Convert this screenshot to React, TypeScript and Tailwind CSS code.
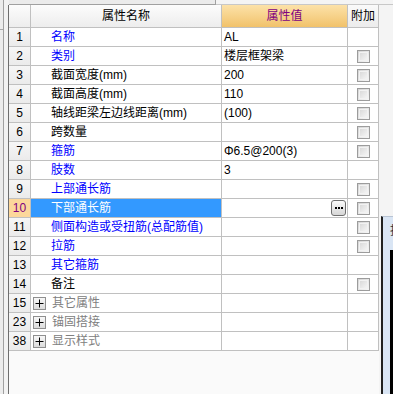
import React from "react";

type Row = {
    n: string;
    name: string;
    tone: "blue" | "black" | "group";
    value?: string;
    check?: boolean;
    selected?: boolean;
};

const rows: Row[] = [
    { n: "1", name: "名称", tone: "blue", value: "AL" },
    { n: "2", name: "类别", tone: "blue", value: "楼层框架梁", check: true },
    { n: "3", name: "截面宽度(mm)", tone: "black", value: "200", check: true },
    { n: "4", name: "截面高度(mm)", tone: "black", value: "110", check: true },
    { n: "5", name: "轴线距梁左边线距离(mm)", tone: "black", value: "(100)", check: true },
    { n: "6", name: "跨数量", tone: "black", check: true },
    { n: "7", name: "箍筋", tone: "blue", value: "Φ6.5@200(3)", check: true },
    { n: "8", name: "肢数", tone: "blue", value: "3" },
    { n: "9", name: "上部通长筋", tone: "blue", check: true },
    { n: "10", name: "下部通长筋", tone: "blue", check: true, selected: true },
    { n: "11", name: "侧面构造或受扭筋(总配筋值)", tone: "blue", check: true },
    { n: "12", name: "拉筋", tone: "blue", check: true },
    { n: "13", name: "其它箍筋", tone: "blue" },
    { n: "14", name: "备注", tone: "black", check: true },
    { n: "15", name: "其它属性", tone: "group" },
    { n: "23", name: "锚固搭接", tone: "group" },
    { n: "38", name: "显示样式", tone: "group" },
];

const CheckBox = () => (
    <div className="w-[13px] h-[13px] border border-[#9c9c9c] bg-gradient-to-br from-[#d4d4d4] to-[#f7f7f7] p-px">
        <div className="w-full h-full border border-[#f2f2f2] bg-gradient-to-br from-[#dadada] to-[#f4f4f4]" />
    </div>
);

const PlusBox = () => (
    <div className="w-[13px] h-[13px] border border-[#8f8f8f] bg-gradient-to-b from-[#f8f8f8] to-[#dcdcdc] flex items-center justify-center">
        <svg width="9" height="9" viewBox="0 0 9 9">
            <path d="M4.5 0.5v8M0.5 4.5h8" stroke="#000" strokeWidth="1" />
        </svg>
    </div>
);

const cell = "border-r border-b border-[#c0c0c0] h-[19px] flex items-center";

export default function App() {
    return (
        <div
            className="w-[393px] h-[394px] bg-[#f0f0f0] relative overflow-hidden flex text-[12px] text-black"
            style={{ fontFamily: '"Liberation Sans", "Noto Sans CJK SC", sans-serif' }}
        >
            {/* left frame strip */}
            <div className="w-[9px] h-full flex shrink-0">
                <div className="w-[3px] h-full bg-[#ececec] flex flex-col">
                    <div className="h-[30px] border-b border-[#a8a8a8]" />
                </div>
                <div className="w-px h-full bg-[#a0a0a0]" />
                <div className="w-[4px] h-full bg-[#f2f2f2]" />
                <div className="w-px h-full flex flex-col">
                    <div className="h-[5px] bg-[#f0f0f0]" />
                    <div className="flex-1 bg-[#6e6e6e]" />
                </div>
            </div>

            <div className="flex flex-col flex-1">
                {/* top edge */}
                <div className="h-[5px] flex shrink-0">
                    <div className="w-[207px] border-b border-r border-[#a0a0a0] bg-[#ebebeb]" />
                    <div className="flex-1 border-b border-[#c8c8c8] bg-[#f4f4f4]" />
                </div>

                <div className="flex flex-1">
                    <div className="flex flex-col bg-[#fafafa] w-[370px]">
                        <div className="grid grid-cols-[22px_191px_126px_31px]">
                            {/* header */}
                            <div className="border-r border-b border-[#c0c0c0] h-[23px] bg-gradient-to-b from-[#fcfcfc] to-[#ededed]" />
                            <div className="border-r border-b border-[#c0c0c0] h-[23px] bg-gradient-to-b from-[#fcfcfc] to-[#ededed] flex items-center justify-center">
                                属性名称
                            </div>
                            <div className="border-r border-b border-[#c0c0c0] h-[23px] bg-gradient-to-b from-[#fce2a8] to-[#f1c26a] flex items-center justify-center text-[#800080]">
                                属性值
                            </div>
                            <div className="border-r border-b border-[#c0c0c0] h-[23px] bg-gradient-to-b from-[#fafafa] to-[#ececec] flex items-center justify-center">
                                附加
                            </div>

                            {rows.map((r) => (
                                <React.Fragment key={r.n}>
                                    <div
                                        className={`${cell} justify-center ${
                                            r.selected
                                                ? "bg-[#fcd79b] text-[#800080]"
                                                : "bg-gradient-to-b from-[#f6f6f6] to-[#ebebeb]"
                                        }`}
                                    >
                                        {r.n}
                                    </div>
                                    <div
                                        className={`${cell} whitespace-nowrap overflow-hidden ${
                                            r.selected
                                                ? "bg-[#3399ff] text-white pl-[20px]"
                                                : r.tone === "group"
                                                ? "bg-white text-[#808080] pl-[2px] gap-[6px]"
                                                : r.tone === "blue"
                                                ? "bg-white text-[#0000ff] pl-[20px]"
                                                : "bg-white text-black pl-[20px]"
                                        }`}
                                    >
                                        {r.tone === "group" && <PlusBox />}
                                        {r.name}
                                    </div>
                                    <div className={`${cell} bg-white pl-[2px] justify-between whitespace-nowrap`}>
                                        <span>{r.value ?? ""}</span>
                                        {r.selected && (
                                            <div className="w-[15px] h-[16px] mr-[1px] rounded-[3px] border border-[#6f6f6f] bg-gradient-to-b from-[#fbfbfb] to-[#d6d6d6] flex items-center justify-center gap-px">
                                                <span className="w-[2px] h-[2px] bg-black" />
                                                <span className="w-[2px] h-[2px] bg-black" />
                                                <span className="w-[2px] h-[2px] bg-black" />
                                            </div>
                                        )}
                                    </div>
                                    <div className={`${cell} bg-white justify-center`}>
                                        {r.check && <CheckBox />}
                                    </div>
                                </React.Fragment>
                            ))}
                        </div>
                        <div className="flex-1 bg-[#fafafa]" />
                    </div>
                    <div className="flex-1 bg-[#f4f4f4]" />
                </div>
            </div>

            {/* floating dialog at right edge */}
            <div className="absolute left-[381px] top-[216px] w-[20px] h-[190px] border-l-2 border-t border-l-[#202020] border-t-[#b8c4d4] bg-[#d9e5f4] flex flex-col">
                <div className="h-[33px] pl-[7px] pt-[8px] text-[#303030] leading-none whitespace-nowrap">指</div>
                <div className="flex-1 ml-[7px] bg-black" />
            </div>
        </div>
    );
}
